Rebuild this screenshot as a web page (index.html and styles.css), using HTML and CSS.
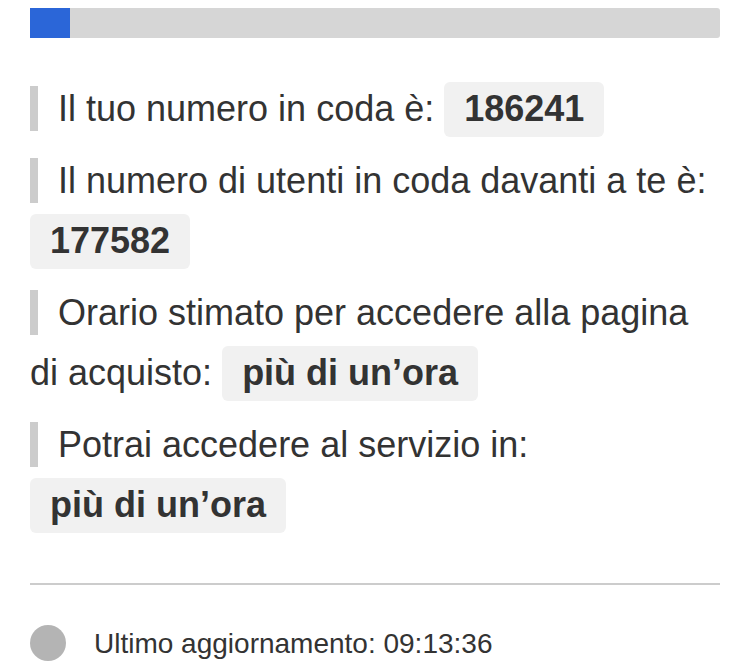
FILE: index.html
```html
<!DOCTYPE html>
<html lang="it">
<head>
<meta charset="utf-8">
<title>Coda</title>
<link rel="stylesheet" href="styles.css">
</head>
<body>
<div class="page">
  <div class="progress"><div class="progress-fill" style="width: 40px"></div></div>
  <div class="rows">
    <p class="row"><span class="label">Il tuo numero in coda è:</span> <span class="badge">186241</span></p>
    <p class="row"><span class="label">Il numero di utenti in coda davanti a te è:</span> <span class="badge">177582</span></p>
    <p class="row"><span class="label">Orario stimato per accedere alla pagina</span> di acquisto: <span class="badge">più di un’ora</span></p>
    <p class="row"><span class="label">Potrai accedere al servizio in:</span> <span class="badge">più di un’ora</span></p>
  </div>
  <hr class="divider">
  <div class="footer">
    <span class="dot"></span>
    <span class="updated">Ultimo aggiornamento: 09:13:36</span>
  </div>
</div>
</body>
</html>
```
FILE: styles.css
```css
html, body {
  margin: 0;
  padding: 0;
  background: #ffffff;
}
body {
  font-family: "Liberation Sans", Arial, sans-serif;
  color: #333333;
}
.page {
  width: 690px;
  margin-left: 30px;
  padding-top: 8px;
}
.progress {
  height: 30px;
  background: #d6d6d6;
  border-radius: 0 3px 3px 0;
  overflow: hidden;
}
.progress-fill {
  height: 100%;
  background: #2b66d8;
}
.rows {
  padding-top: 41px;
}
.row {
  margin: 0 0 12px 0;
  font-size: 36px;
  line-height: 60px;
}
.row:last-child {
  margin-bottom: 0;
}
.label {
  border-left: 8px solid #cccccc;
  padding: 2px 0 2px 20px;
}
.badge {
  display: inline-block;
  background: #f1f1f1;
  border-radius: 6px;
  padding: 7px 20px 8px 20px;
  line-height: 40px;
  font-weight: bold;
}
.divider {
  border: none;
  height: 2px;
  background: #cccccc;
  margin: 48px 0 0 0;
}
.footer {
  display: flex;
  align-items: center;
  gap: 28px;
  margin-top: 40px;
}
.dot {
  width: 36px;
  height: 36px;
  border-radius: 50%;
  background: #b4b4b4;
  flex: none;
}
.updated {
  font-size: 28px;
  line-height: 36px;
  position: relative;
  top: 1px;
}
```
